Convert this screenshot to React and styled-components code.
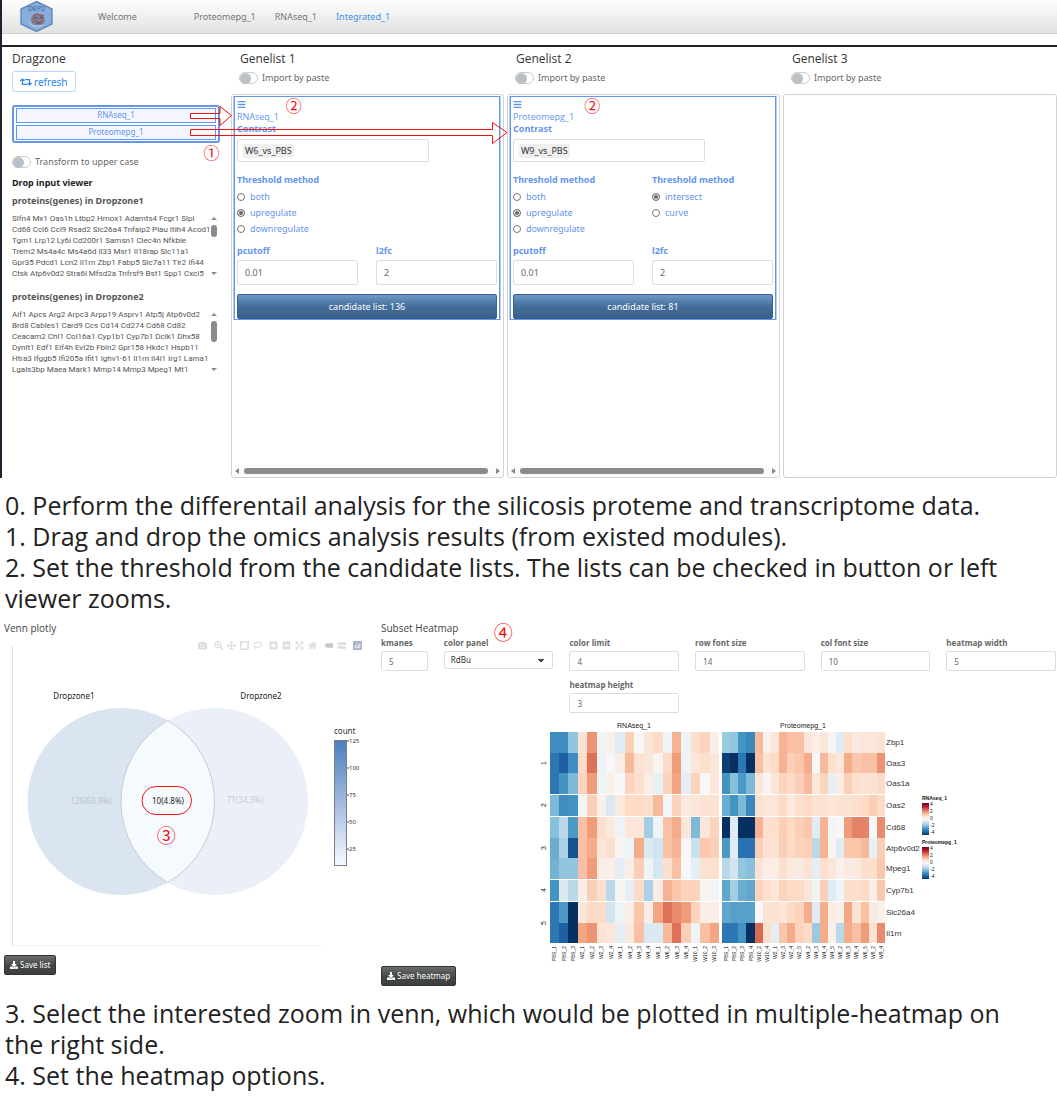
import React, { useState } from "react";
import styled, { createGlobalStyle } from "styled-components";
import {
  FaBars, FaRetweet, FaDownload, FaCamera, FaSearchPlus, FaArrowsAlt,
  FaPlusSquare, FaMinusSquare, FaExpandArrowsAlt, FaHome,
} from "react-icons/fa";

const BLUE = "#6495ed";
const GREY = "#666";
const RED = "#f50f0f";
const NARROW = `"Open Sans", "Noto Sans", sans-serif`;

const GlobalStyle = createGlobalStyle`
  *, *::before, *::after { box-sizing: border-box; }
  body {
    margin: 0;
    background: #fff;
    color: #333;
    font-family: "Noto Sans", "Open Sans", sans-serif;
    font-size: 9px;
    line-height: 12px;
  }
  button, input, select { font: inherit; color: inherit; margin: 0; }
`;

/* ---------- top screen ---------- */

const Screen = styled.section`
  position: relative;
  border-left: 2px solid #1d2230;
`;

const Navbar = styled.nav`
  display: flex;
  align-items: center;
  height: 34px;
  padding: 0 18px;
  border-bottom: 1px solid #ccc;
  background: linear-gradient(#fdfdfd, #f3f3f3 40%, #e1e1e1);
`;

const Brand = styled.a`
  display: flex;
  width: 78px;
`;

const NavLink = styled.a`
  color: ${(p) => (p.$active ? "#3c92e8" : "#777")};
  text-decoration: none;
  margin-right: ${(p) => p.$gap || 19}px;
`;

const Columns = styled.div`
  display: grid;
  grid-template-columns: 226fr 273fr 273fr 274fr;
  column-gap: 3px;
  margin-top: 11px;
  padding-top: 4px;
  border-top: 2px solid #222;
`;

const Column = styled.div`
  display: flex;
  flex-direction: column;
  min-width: 0;
`;

const DragColumn = styled(Column)`
  padding: 0 8px 0 10px;
`;

const Title = styled.h2`
  margin: 0;
  padding-left: ${(p) => p.$inset || 0}px;
  color: #333;
  font-family: ${NARROW};
  font-size: 12px;
  font-weight: 400;
  line-height: 16px;
`;

const RefreshButton = styled.button`
  display: flex;
  align-items: center;
  align-self: flex-start;
  gap: 2px;
  height: 21px;
  margin-top: 4px;
  padding: 0 7px;
  border: 1px solid #b8d6fb;
  border-radius: 3px;
  background: #fff;
  color: #2a86f0;
  font-size: 10px;
  svg { width: 12px; height: 12px; }
`;

const Bucket = styled.ul`
  display: grid;
  gap: 2px;
  margin: 13px 0 0;
  padding: 1px 2px;
  border: 2px solid ${BLUE};
  border-radius: 3px;
  list-style: none;
`;

const BucketItem = styled.li`
  height: 15px;
  border: 1px solid ${BLUE};
  background: #f6f7fe;
  color: ${BLUE};
  font-size: 8px;
  line-height: 12px;
  text-align: center;
`;

const SwitchLabel = styled.label`
  display: flex;
  align-items: center;
  gap: 4px;
  height: 16px;
  margin-top: ${(p) => p.$top}px;
  padding-left: ${(p) => p.$inset || 0}px;
  color: ${GREY};
`;

const SwitchInput = styled.input`
  appearance: none;
  display: flex;
  width: 19px;
  height: 12px;
  border: 1px solid #ccc;
  border-radius: 6px;
  background: #fff;
  &::before {
    content: "";
    width: 11px;
    height: 11px;
    border-radius: 50%;
    background: #bcc1c5;
  }
  &:checked { justify-content: flex-end; }
`;

const ViewerTitle = styled.h3`
  margin: 7px 0 6px;
  color: #222;
  font-size: 9px;
  line-height: 12px;
`;

const GeneHeading = styled.h4`
  margin: 0 0 6px;
  color: #555;
  font-size: 9px;
  line-height: 12px;
`;

const GeneViewer = styled.div`
  display: flex;
  height: 66px;
  margin-bottom: 12px;
  color: #555;
`;

const GeneText = styled.p`
  flex: 1;
  min-width: 0;
  margin: 0;
  font-family: Roboto, "Noto Sans", sans-serif;
  font-size: 8px;
  line-height: 11px;
  white-space: pre;
`;

const VScroll = styled.div`
  display: flex;
  flex: none;
  flex-direction: column;
  align-items: center;
  width: 12px;
  padding: 4px 0;
`;

const VThumb = styled.div`
  width: 6px;
  height: ${(p) => p.$size}px;
  margin: 5px 0 auto;
  border-radius: 3px;
  background: #8b8b8b;
`;

const Arrow = styled.i`
  width: 0;
  height: 0;
  border: 3px solid transparent;
  ${(p) => p.$dir === "up" && "border-bottom-color: #888; border-top: 0;"}
  ${(p) => p.$dir === "down" && "border-top-color: #888; border-bottom: 0;"}
  ${(p) => p.$dir === "left" && "border-right: 4px solid #888; border-left: 0;"}
  ${(p) => p.$dir === "right" && "border-left: 4px solid #888; border-right: 0;"}
`;

const DropPanel = styled.div`
  display: flex;
  flex-direction: column;
  justify-content: space-between;
  height: 384px;
  margin-top: 8px;
  padding: 1px 2px 1px 1px;
  border: 1px solid #d2d2d2;
  border-radius: 3px;
`;

const DropCard = styled.div`
  margin: 0 1px;
  padding: 0 2px;
  border: 1px solid ${BLUE};
  box-shadow: -1px 0 #b4cbf7, 1px 0 #b4cbf7;
  color: ${BLUE};
`;

const CardIcon = styled.div`
  display: flex;
  align-items: center;
  height: 14px;
  svg { width: 9px; height: 9px; }
`;

const CardName = styled.div`
  font-family: ${NARROW};
`;

const FieldLabel = styled.label`
  display: block;
  font-weight: 700;
`;

const Legend = styled.legend`
  padding: 0;
  font-weight: 700;
`;

const TokenBox = styled.div`
  display: flex;
  align-items: center;
  width: 74%;
  height: 23px;
  margin: 4px 0 12px;
  padding: 0 5px;
  border: 1px solid #ddd;
  border-radius: 2px;
  background: #fff;
`;

const Token = styled.span`
  padding: 1px 2px;
  border-radius: 2px;
  background: #efefef;
  color: #333;
`;

const TokenInput = styled.input`
  flex: 1;
  min-width: 0;
  border: 0;
  outline: 0;
  background: none;
`;

const TwoUp = styled.div`
  display: grid;
  grid-template-columns: 1fr 1fr;
  column-gap: 18px;
  align-items: start;
`;

const RadioSet = styled.fieldset`
  min-width: 0;
  margin: 0;
  padding: 0 0 8px;
  border: 0;
`;

const RadioLabel = styled.label`
  display: flex;
  align-items: center;
  gap: 5px;
  height: 16px;
  &:first-of-type { margin-top: 3px; }
`;

const Radio = styled.input`
  appearance: none;
  width: 8px;
  height: 8px;
  border: 1px solid #767676;
  border-radius: 50%;
  background: #fff;
  &:checked {
    background: #666;
    box-shadow: inset 0 0 0 1px #fff;
  }
`;

const NumberInput = styled.input`
  display: block;
  width: 100%;
  height: ${(p) => (p.$small ? 20 : 25)}px;
  margin-top: ${(p) => (p.$small ? 2 : 3)}px;
  padding: 0 7px;
  border: 1px solid #ddd;
  border-radius: 2px;
  background: #fff;
  color: ${GREY};
`;

const CandidateButton = styled.button`
  display: block;
  width: 100%;
  height: 25px;
  margin-top: 9px;
  border: 1px solid #3a5f88;
  border-radius: 2px;
  background: linear-gradient(#6e98c6, #446e9b 50%, #3a6089);
  color: #fff;
`;

const HScroll = styled.div`
  display: flex;
  align-items: center;
  gap: 5px;
  height: 11px;
  padding: 0 1px 0 2px;
  background: #fbfbfb;
`;

const HThumb = styled.div`
  flex: 1;
  height: 6px;
  margin-right: 3px;
  border-radius: 3px;
  background: #8b8b8b;
`;

const MarkLayer = styled.svg`
  position: absolute;
  top: 0;
  left: -2px;
  width: calc(100% + 2px);
  height: 100%;
  pointer-events: none;
`;

const Mark = styled.span`
  position: absolute;
  left: ${(p) => p.$x}%;
  top: ${(p) => p.$y}px;
  color: ${RED};
  font-family: "Noto Sans CJK SC", sans-serif;
  font-size: ${(p) => p.$size || 16}px;
  line-height: 18px;
`;

/* ---------- written steps ---------- */

const Steps = styled.div`
  padding: 0 30px 0 5px;
  margin: 12px 0 ${(p) => (p.$last ? 16 : 0)}px;
  color: #222;
  font-family: ${NARROW};
  font-size: 25px;
  line-height: 31px;
  p { margin: 0; }
`;

/* ---------- lower screen ---------- */

const Results = styled.section`
  display: grid;
  grid-template-columns: 377fr 675fr;
  padding: 6px 1px 0 4px;
`;

const Pane = styled.div`
  position: relative;
  min-width: 0;
`;

const PaneTitle = styled.h2`
  margin: 0 0 1px;
  color: #444;
  font-family: ${NARROW};
  font-size: 10px;
  font-weight: 400;
  line-height: 16px;
`;

const Chart = styled.svg`
  display: block;
  width: 100%;
  height: auto;
  font-family: "Liberation Sans", Arial, sans-serif;
`;

const VennChart = styled(Chart)`
  font-family: "Noto Sans", "Open Sans", sans-serif;
`;

const ModeBar = styled.div`
  position: absolute;
  top: 21px;
  right: 19px;
  display: flex;
  gap: 7px;
`;

const ModeGroup = styled.div`
  display: flex;
  gap: 4px;
`;

const ModeButton = styled.button`
  display: flex;
  padding: 0;
  border: 0;
  background: none;
  color: ${(p) => p.$tone || "#dedede"};
  svg { width: 9px; height: 9px; }
`;

const SaveButton = styled.button`
  display: flex;
  align-items: center;
  gap: 2px;
  height: 20px;
  padding: 0 5px;
  border: 1px solid #333;
  border-radius: 2px;
  background: linear-gradient(#6a6d6d, #474949 50%, #3d3f3f);
  color: #fff;
  font-size: 8px;
  svg { width: 8px; height: 8px; }
`;

const Options = styled.div`
  display: grid;
  grid-template-columns: 47fr repeat(5, 110fr);
  gap: 8px 16px;
  height: 77px;
  align-content: start;
`;

const Option = styled.div`
  grid-column: ${(p) => p.$col || "auto"};
  min-width: 0;
  font-size: 8px;
  color: ${GREY};
`;

const OptionLabel = styled.label`
  display: block;
  font-family: ${NARROW};
  line-height: 12px;
  font-weight: 700;
  white-space: nowrap;
`;

const Picker = styled.select`
  appearance: none;
  display: block;
  width: 100%;
  height: 18px;
  margin-top: 2px;
  padding: 0 6px;
  border: 1px solid #ddd;
  border-radius: 2px;
  background: linear-gradient(to bottom right, #444 50%, transparent 51%) no-repeat right 8px center / 3px 3px,
    linear-gradient(to bottom left, #444 50%, transparent 51%) no-repeat right 11px center / 3px 3px, #fff;
  color: #333;
`;

/* ---------- data ---------- */

const genes1 = `Slfn4 Mx1 Oas1h Ltbp2 Hmox1 Adamts4 Fcgr1 Slpi
Cd68 Ccl6 Ccl9 Rsad2 Slc26a4 Tnfaip2 Plau Itih4 Acod1
Tgm1 Lrp12 Ly6i Cd200r1 Samsn1 Clec4n Nfkbie
Trem2 Ms4a4c Ms4a6d Il33 Msr1 Il18rap Slc11a1
Gpr35 Pdcd1 Lcn2 Il1rn Zbp1 Fabp5 Slc7a11 Tlr2 Ifi44
Ctsk Atp6v0d2 Stra6l Mfsd2a Tnfrsf9 Bst1 Spp1 Cxcl5`;

const genes2 = `Aif1 Apcs Arg2 Arpc3 Arpp19 Asprv1 Atp5j Atp6v0d2
Brd8 Cables1 Card9 Ccs Cd14 Cd274 Cd68 Cd82
Ceacam2 Chl1 Col16a1 Cyp1b1 Cyp7b1 Dclk1 Dhx58
Dynlt1 Edf1 Eif4h Evi2b Fbln2 Gpr158 Hkdc1 Hspb11
Htra3 Ifggb5 Ifi205a Ifit1 Ighv1-61 Il1rn Il4i1 Irg1 Lama1
Lgals3bp Maea Mark1 Mmp14 Mmp3 Mpeg1 Mt1`;

const rnaCols = "PBS_1 PBS_2 PBS_3 W2_1 W2_2 W2_3 W2_4 W4_1 W4_2 W4_3 W4_4 W6_1 W6_2 W6_3 W6_4 W10_1 W10_2 W10_3".split(" ");
const protCols = "PBS_1 PBS_2 PBS_3 PBS_4 W10_2 W10_4 W2_1 W2_3 W2_4 W2_5 W4_2 W4_3 W4_4 W4_5 W6_2 W6_3 W6_4 W6_5 W9_2 W9_4".split(" ");

/* expression values in tenths */
const rows = [
  { gene: "Zbp1", y: 732, h: 21,
    rna: [-25,-25,-16,6,18,-2,2,-5,10,0,5,8,-2,14,-2,7,9,2],
    prot: [-15,-16,-24,-26,13,2,5,14,12,12,5,3,5,1,-5,7,4,5,5,6] },
  { gene: "Oas3", y: 753, h: 20,
    rna: [-29,-33,-25,8,22,-2,0,3,13,6,5,1,8,17,-2,5,7,5],
    prot: [-38,-40,-29,-40,12,6,8,14,10,11,15,0,13,7,5,15,11,12,12,18] },
  { gene: "Oas1a", y: 773, h: 21,
    rna: [-29,-24,-18,9,17,-2,2,0,9,7,3,-3,9,16,-4,9,0,5],
    prot: [-24,-17,-23,-18,5,1,5,9,8,10,13,5,9,-3,3,10,7,6,6,8] },
  { gene: "Oas2", y: 795, h: 21,
    rna: [-18,-25,-24,-1,10,2,-6,4,8,8,7,13,-1,9,4,5,6,6],
    prot: [-20,-24,-18,-26,6,5,5,8,4,7,8,6,6,5,6,6,7,8,10,8] },
  { gene: "Cd68", y: 817, h: 21,
    rna: [-17,-11,-23,12,17,7,4,-2,5,5,-14,-2,12,15,5,-18,5,9],
    prot: [-40,-5,-40,-40,14,7,7,10,8,10,11,-5,14,-1,0,17,20,20,0,19] },
  { gene: "Atp6v0d2", y: 838, h: 20,
    rna: [-20,-13,-35,12,15,5,7,1,-2,15,-6,-8,12,14,0,-9,11,10],
    prot: [-23,-5,-30,-30,10,6,6,10,8,9,10,-11,14,1,-5,11,11,13,-3,10] },
  { gene: "Mpeg1", y: 858, h: 21,
    rna: [-19,-16,-16,12,17,3,2,-4,3,10,-2,-7,7,12,0,-4,6,7],
    prot: [-11,-8,-16,-17,6,3,3,7,4,4,6,-4,7,5,2,4,4,7,7,11] },
  { gene: "Cyp7b1", y: 880, h: 21,
    rna: [-24,-6,-11,3,10,7,-11,1,-4,8,-13,3,14,11,9,9,1,-1],
    prot: [-21,-14,-20,-21,9,7,5,9,8,8,5,-2,10,-5,-2,7,7,8,3,11] },
  { gene: "Slc26a4", y: 902, h: 21,
    rna: [-29,-23,-40,5,8,8,-8,-2,3,11,3,16,22,19,17,9,3,3],
    prot: [-21,-22,-22,-22,0,6,6,5,8,9,15,-5,15,3,2,16,6,12,4,2] },
  { gene: "Il1rn", y: 923, h: 20,
    rna: [-29,-33,-40,16,18,6,5,-4,4,12,-6,-6,13,22,10,-2,12,16],
    prot: [-29,-29,-24,-40,23,7,-4,11,15,9,8,-15,15,2,-11,15,12,17,6,19] },
];

const clusters = [[1, 763], [2, 805], [3, 848], [4, 890], [5, 923]];

const ramp = [
  [5,48,97],[33,102,172],[67,147,195],[146,197,222],[209,229,240],[247,247,247],
  [253,219,199],[244,165,130],[214,96,77],[178,24,43],[103,0,31],
];

function tone(v) {
  const t = Math.max(0, Math.min(10, (v + 40) / 8));
  const i = Math.min(9, Math.floor(t));
  const f = t - i;
  const c = ramp[i].map((a, k) => Math.round(a + (ramp[i + 1][k] - a) * f));
  return `rgb(${c.join(",")})`;
}

/* ---------- drawings ---------- */

function Logo() {
  return (
    <svg width="34" height="33" viewBox="0 0 34 33" role="img" aria-label="DEP2">
      <path d="M16.500 1.500 32 9v15L16.500 31.500 1 24V9z" fill="#86addb" stroke="#6389bd" strokeWidth="1.4" />
      <text x="16.500" y="11" textAnchor="middle" fontSize="7" fill="#44699c" fontFamily="Noto Sans, sans-serif">DEP2</text>
      <path d="M12 16c2-3 9-3 12 0l1 5c-1 4-5 5-8 4-4 1-6-2-6-5z" fill="#7b8594" />
      <path d="M13 16l4-2 4 2 3-1M11 19h5m2 0h6M12 22l4-1 3 2 4-2" fill="none" stroke="#a05a60" strokeWidth="1.2" />
      <path d="M14 17.5h3m3 0h3M16 23h5" stroke="#3f4d66" strokeWidth="1" />
      <path d="M9 22c2 4 8 6 14 3" fill="none" stroke="#c7d4e6" strokeWidth="1" />
    </svg>
  );
}

function Venn() {
  return (
    <VennChart viewBox="4 637 377 318" role="img" aria-label="Venn diagram of Dropzone1 and Dropzone2">
      <defs>
        <linearGradient id="count" x1="0" y1="0" x2="0" y2="1">
          <stop offset="0" stopColor="#4a80bd" />
          <stop offset="0.5" stopColor="#a3b9df" />
          <stop offset="0.8" stopColor="#d6e2f2" />
          <stop offset="1" stopColor="#f5faff" />
        </linearGradient>
      </defs>
      <path d="M12.5 646V946" stroke="#dedede" fill="none" />
      <path d="M12.5 945.5H322" stroke="#efefef" fill="none" />
      <circle cx="121" cy="801.5" r="93.5" fill="#dbe5f1" />
      <circle cx="214.5" cy="801.5" r="93.5" fill="#ebeff7" />
      <path d="M167.75 720.5A93.5 93.5 0 0 1 167.75 882.5A93.5 93.5 0 0 1 167.75 720.5Z" fill="#f5faff" stroke="#c9cbce" />
      <g fontSize="8" textAnchor="middle">
        <text x="74" y="699" fill="#222">Dropzone1</text>
        <text x="261" y="699" fill="#222">Dropzone2</text>
        <text x="91" y="804" fill="#b9c2ce">126(60.9%)</text>
        <text x="245" y="803" fill="#c6cad2">71(34.3%)</text>
        <text x="168" y="804" fill="#222">10(4.8%)</text>
      </g>
      <rect x="142" y="786.5" width="49.500" height="28" rx="14" fill="none" stroke={RED} />
      <text x="334" y="734" fontSize="8" fill="#333">count</text>
      <rect x="334.500" y="740.500" width="12" height="125" fill="url(#count)" stroke="#77808c" />
      {[125, 100, 75, 50, 25].map((n, i) => (
        <g key={n}>
          <path d={`M347 ${741 + i * 27}h2`} stroke="#555" strokeWidth="1" />
          <text x="349" y={743 + i * 27} fontSize="6" fill="#333">{n}</text>
        </g>
      ))}
    </VennChart>
  );
}

function HeatPanel({ field, cols, x, width }) {
  const w = width / cols.length;
  return (
    <g shapeRendering="crispEdges">
      {rows.map((r) =>
        r[field].map((v, i) => (
          <rect key={r.gene + i} x={x + i * w} y={r.y} width={w + 0.2} height={r.h} fill={tone(v)} />
        ))
      )}
      {cols.map((c, i) => (
        <text key={c} transform={`translate(${x + (i + 0.5) * w + 2} 946) rotate(-90)`} textAnchor="end" fontSize="5" fill="#111">{c}</text>
      ))}
    </g>
  );
}

function ScaleKey({ id, label, y }) {
  return (
    <g>
      <defs>
        <linearGradient id={id} x1="0" y1="0" x2="0" y2="1">
          {ramp.map((c, i) => (
            <stop key={i} offset={1 - i / 10} stopColor={`rgb(${c.join(",")})`} />
          )).reverse()}
        </linearGradient>
      </defs>
      <text x="922" y={y} fontSize="5" fontWeight="700" fill="#111">{label}</text>
      <rect x="922" y={y + 3} width="7" height="32" fill={`url(#${id})`} />
      {[4, 2, 0, -2, -4].map((n, i) => (
        <text key={n} x="930" y={y + 6 + i * 7} fontSize="5" fill="#222">{n}</text>
      ))}
    </g>
  );
}

function Heatmap() {
  return (
    <Chart viewBox="381 714 675 252" role="img" aria-label="Heatmap of RNAseq_1 and Proteomepg_1">
      <text x="634" y="728" fontSize="7" textAnchor="middle" fill="#222">RNAseq_1</text>
      <text x="803" y="728" fontSize="7" textAnchor="middle" fill="#222">Proteomepg_1</text>
      {clusters.map(([n, y]) => (
        <text key={n} transform={`translate(546 ${y}) rotate(-90)`} textAnchor="middle" fontSize="7" fill="#222">{n}</text>
      ))}
      <HeatPanel field="rna" cols={rnaCols} x={549.5} width={169.5} />
      <HeatPanel field="prot" cols={protCols} x={722} width={163} />
      {rows.map((r) => (
        <text key={r.gene} x="886" y={r.y + 13} fontSize="8" fill="#333">{r.gene}</text>
      ))}
      <ScaleKey id="keyRna" label="RNAseq_1" y={800} />
      <ScaleKey id="keyProt" label="Proteomepg_1" y={844} />
    </Chart>
  );
}

/* ---------- parts ---------- */

function Switch({ label, top, inset }) {
  return (
    <SwitchLabel $top={top} $inset={inset}>
      <SwitchInput type="checkbox" />
      {label}
    </SwitchLabel>
  );
}

function GeneBox({ title, text, thumb }) {
  return (
    <>
      <GeneHeading>{title}</GeneHeading>
      <GeneViewer>
        <GeneText>{text}</GeneText>
        <VScroll aria-hidden="true">
          <Arrow $dir="up" />
          <VThumb $size={thumb} />
          <Arrow $dir="down" />
        </VScroll>
      </GeneViewer>
    </>
  );
}

function RadioGroup({ name, options, initial }) {
  const [value, setValue] = useState(initial);
  return (
    <RadioSet>
      <Legend>Threshold method</Legend>
      {options.map((o) => (
        <RadioLabel key={o}>
          <Radio type="radio" name={name} checked={value === o} onChange={() => setValue(o)} />
          {o}
        </RadioLabel>
      ))}
    </RadioSet>
  );
}

function Card({ id, name, contrast, count, second }) {
  return (
    <DropCard>
      <CardIcon><FaBars /></CardIcon>
      <CardName>{name}</CardName>
      <FieldLabel htmlFor={`${id}-contrast`}>Contrast</FieldLabel>
      <TokenBox>
        <Token>{contrast}</Token>
        <TokenInput id={`${id}-contrast`} type="text" />
      </TokenBox>
      <TwoUp>
        <RadioGroup name={`${id}-dir`} options={["both", "upregulate", "downregulate"]} initial="upregulate" />
        {second && <RadioGroup name={`${id}-mode`} options={["intersect", "curve"]} initial="intersect" />}
      </TwoUp>
      <TwoUp>
        <div>
          <FieldLabel htmlFor={`${id}-p`}>pcutoff</FieldLabel>
          <NumberInput id={`${id}-p`} defaultValue="0.01" />
        </div>
        <div>
          <FieldLabel htmlFor={`${id}-fc`}>l2fc</FieldLabel>
          <NumberInput id={`${id}-fc`} defaultValue="2" />
        </div>
      </TwoUp>
      <CandidateButton type="button">candidate list: {count}</CandidateButton>
    </DropCard>
  );
}

function GeneList({ title, children }) {
  return (
    <Column>
      <Title $inset={9}>{title}</Title>
      <Switch label="Import by paste" top={3} inset={8} />
      <DropPanel>
        {children}
        {children && (
          <HScroll aria-hidden="true">
            <Arrow $dir="left" />
            <HThumb />
            <Arrow $dir="right" />
          </HScroll>
        )}
      </DropPanel>
    </Column>
  );
}

function NumberOption({ id, label, value, col }) {
  return (
    <Option $col={col}>
      <OptionLabel htmlFor={id}>{label}</OptionLabel>
      <NumberInput $small id={id} defaultValue={value} />
    </Option>
  );
}

function ModeTools() {
  return (
    <ModeBar>
      <ModeGroup>
        <ModeButton aria-label="Download plot"><FaCamera /></ModeButton>
      </ModeGroup>
      <ModeGroup>
        <ModeButton aria-label="Zoom"><FaSearchPlus /></ModeButton>
        <ModeButton aria-label="Pan"><FaArrowsAlt /></ModeButton>
        <ModeButton aria-label="Box select" $tone="#bdbdbd">
          <svg viewBox="0 0 10 10"><rect x="1" y="1" width="8" height="8" fill="none" stroke="currentColor" strokeWidth="1.4" strokeDasharray="1.6 1" /></svg>
        </ModeButton>
        <ModeButton aria-label="Lasso select">
          <svg viewBox="0 0 10 10"><path d="M3 7C0 6 .5 2 4.500 1.500S10 3 9 5 5 7.500 3.500 6.500 2 9 3.500 9" fill="none" stroke="currentColor" strokeWidth="1.200" /></svg>
        </ModeButton>
      </ModeGroup>
      <ModeGroup>
        <ModeButton aria-label="Zoom in"><FaPlusSquare /></ModeButton>
        <ModeButton aria-label="Zoom out"><FaMinusSquare /></ModeButton>
        <ModeButton aria-label="Autoscale"><FaExpandArrowsAlt /></ModeButton>
        <ModeButton aria-label="Reset axes"><FaHome /></ModeButton>
      </ModeGroup>
      <ModeGroup>
        <ModeButton aria-label="Show closest" $tone="#c8c8c8">
          <svg viewBox="0 0 10 10"><path d="M.5 5 3 2.500h7v5H3z" fill="currentColor" /></svg>
        </ModeButton>
        <ModeButton aria-label="Compare data">
          <svg viewBox="0 0 10 10"><path d="M0 3l1.500-1.500H10v3H1.500zM0 7l1.500-1.500H10v3H1.500z" fill="currentColor" /></svg>
        </ModeButton>
      </ModeGroup>
      <ModeGroup>
        <ModeButton aria-label="Plotly" $tone="#a9b2c6">
          <svg viewBox="0 0 10 10"><rect x="0" y="0" width="10" height="10" rx="1" fill="currentColor" /><path d="M2.500 4.500V8M4.200 2.500V4M4.200 5v3M6 4.500V8M7.600 2.500V8" stroke="#fff" strokeWidth=".9" /></svg>
        </ModeButton>
      </ModeGroup>
    </ModeBar>
  );
}

export default function App() {
  return (
    <main>
      <GlobalStyle />
      <Screen>
        <Navbar>
          <Brand href="#home"><Logo /></Brand>
          <NavLink href="#welcome" $gap={57}>Welcome</NavLink>
          <NavLink href="#proteome">Proteomepg_1</NavLink>
          <NavLink href="#rnaseq">RNAseq_1</NavLink>
          <NavLink href="#integrated" $active>Integrated_1</NavLink>
        </Navbar>
        <Columns>
          <DragColumn>
            <Title>Dragzone</Title>
            <RefreshButton type="button"><FaRetweet />refresh</RefreshButton>
            <Bucket>
              <BucketItem>RNAseq_1</BucketItem>
              <BucketItem>Proteomepg_1</BucketItem>
            </Bucket>
            <Switch label="Transform to upper case" top={11} />
            <ViewerTitle>Drop input viewer</ViewerTitle>
            <GeneBox title="proteins(genes) in Dropzone1" text={genes1} thumb={12} />
            <GeneBox title="proteins(genes) in Dropzone2" text={genes2} thumb={21} />
          </DragColumn>
          <GeneList title="Genelist 1">
            <Card id="g1" name="RNAseq_1" contrast="W6_vs_PBS" count={136} />
          </GeneList>
          <GeneList title="Genelist 2">
            <Card id="g2" name="Proteomepg_1" contrast="W9_vs_PBS" count={81} second />
          </GeneList>
          <GeneList title="Genelist 3" />
        </Columns>
        <MarkLayer viewBox="0 0 1057 478" preserveAspectRatio="none" aria-hidden="true">
          <g fill="none" stroke={RED}>
            <path d="M190.500 113.500H220V106.500L231.500 115.500 220 125.500V118.500H190.500z" />
            <path d="M190.500 129.500H492.500V122.500L507 132.500 492.500 143.500V135.500H190.500z" />
          </g>
        </MarkLayer>
        <Mark $x={19.1} $y={143}>①</Mark>
        <Mark $x={26.9} $y={96}>②</Mark>
        <Mark $x={55.2} $y={96}>②</Mark>
      </Screen>

      <Steps>
        <p>0. Perform the differentail analysis for the silicosis proteme and transcriptome data.</p>
        <p>1. Drag and drop the omics analysis results (from existed modules).</p>
        <p>2. Set the threshold from the candidate lists. The lists can be checked in button or left viewer zooms.</p>
      </Steps>

      <Results>
        <Pane>
          <PaneTitle>Venn plotly</PaneTitle>
          <Venn />
          <ModeTools />
          <SaveButton type="button"><FaDownload />Save list</SaveButton>
          <Mark $x={40.5} $y={206} $size={19}>③</Mark>
        </Pane>
        <Pane>
          <PaneTitle>Subset Heatmap</PaneTitle>
          <Options>
            <NumberOption id="kmeans" label="kmanes" value="5" />
            <Option>
              <OptionLabel htmlFor="palette">color panel</OptionLabel>
              <Picker id="palette" defaultValue="RdBu">
                <option>RdBu</option>
              </Picker>
            </Option>
            <NumberOption id="limit" label="color limit" value="4" />
            <NumberOption id="rowfont" label="row font size" value="14" />
            <NumberOption id="colfont" label="col font size" value="10" />
            <NumberOption id="hmwidth" label="heatmap width" value="5" />
            <NumberOption id="hmheight" label="heatmap height" value="3" col="3" />
          </Options>
          <Heatmap />
          <SaveButton type="button"><FaDownload />Save heatmap</SaveButton>
          <Mark $x={16.7} $y={3} $size={19}>④</Mark>
        </Pane>
      </Results>

      <Steps $last>
        <p>3. Select the interested zoom in venn, which would be plotted in multiple-heatmap on the right side.</p>
        <p>4. Set the heatmap options.</p>
      </Steps>
    </main>
  );
}
